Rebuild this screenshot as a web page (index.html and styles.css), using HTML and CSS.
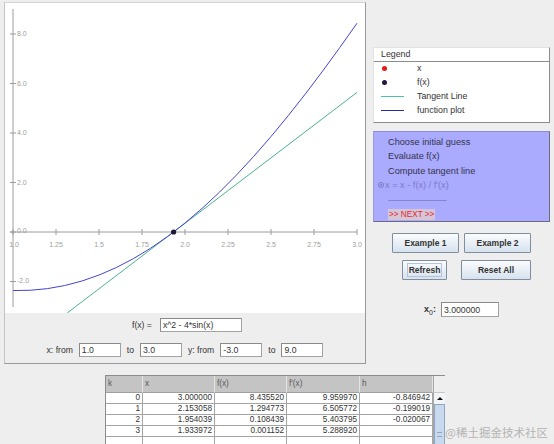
FILE: index.html
```html
<!DOCTYPE html>
<html lang="en">

<head>
    <meta charset="UTF-8">
    <meta name="viewport" content="width=device-width, initial-scale=1.0">
    <link rel="stylesheet" href="styles.css">
</head>

<body>

    <div class="app">
        <div class="top">
            <div class="plot-panel">
                <svg class="plot" width="360" height="310" viewBox="0 0 360 310">
                    <!-- axes -->
                    <g class="axis">
                        <line x1="8" y1="6" x2="8" y2="304" />
                        <line x1="5" y1="229" x2="352" y2="229" />
                        <line x1="8" y1="226" x2="8" y2="232" />
                        <line x1="51" y1="226" x2="51" y2="232" />
                        <line x1="94" y1="226" x2="94" y2="232" />
                        <line x1="137" y1="226" x2="137" y2="232" />
                        <line x1="180" y1="226" x2="180" y2="232" />
                        <line x1="223" y1="226" x2="223" y2="232" />
                        <line x1="266" y1="226" x2="266" y2="232" />
                        <line x1="309" y1="226" x2="309" y2="232" />
                        <line x1="352" y1="226" x2="352" y2="232" />
                        <line x1="5" y1="31" x2="11" y2="31" />
                        <line x1="5" y1="80.5" x2="11" y2="80.5" />
                        <line x1="5" y1="130" x2="11" y2="130" />
                        <line x1="5" y1="179.5" x2="11" y2="179.5" />
                        <line x1="5" y1="229" x2="11" y2="229" />
                        <line x1="5" y1="278.5" x2="11" y2="278.5" />
                    </g>
                    <g class="tick-label x-labels">
                        <text x="9" y="243.5">1.0</text>
                        <text x="51" y="243.5">1.25</text>
                        <text x="94" y="243.5">1.5</text>
                        <text x="137" y="243.5">1.75</text>
                        <text x="180" y="243.5">2.0</text>
                        <text x="223" y="243.5">2.25</text>
                        <text x="266" y="243.5">2.5</text>
                        <text x="309" y="243.5">2.75</text>
                        <text x="352" y="243.5">3.0</text>
                    </g>
                    <g class="tick-label y-labels">
                        <text x="12" y="33">8.0</text>
                        <text x="12" y="82.5">6.0</text>
                        <text x="12" y="132">4.0</text>
                        <text x="12" y="181.5">2.0</text>
                        <text x="12" y="230">0.0</text>
                        <text x="12" y="280">-2.0</text>
                    </g>
                    <!-- tangent line and function -->
                    <line class="tangent" x1="62.2" y1="310" x2="352" y2="89.4" />
                    <polyline class="curve" points="8,287.56 25.2,287.28 42.4,285.63 59.6,282.57 76.8,278.05 94,272.06 111.2,264.6 128.4,255.65 145.6,245.22 162.8,233.34 180,220.02 197.2,205.31 214.4,189.25 231.6,171.9 248.8,153.31 266,133.56 283.2,112.73 300.4,90.88 317.6,68.12 334.8,44.54 352,20.22" />
                    <circle class="root" cx="168.6" cy="229" r="2.6" />
                </svg>

                <div class="controls">
                    <div class="ctl-row fx-row">
                        <span>f(x) =</span>
                        <input class="field w-fx" type="text" value="x^2 - 4*sin(x)">
                    </div>
                    <div class="ctl-row">
                        <span>x: from</span>
                        <input class="field w-num" type="text" value="1.0">
                        <span>to</span>
                        <input class="field w-num" type="text" value="3.0">
                        <span>y: from</span>
                        <input class="field w-num" type="text" value="-3.0">
                        <span>to</span>
                        <input class="field w-num" type="text" value="9.0">
                    </div>
                </div>
            </div>

            <div class="side">
                <div class="legend">
                    <div class="legend-title">Legend</div>
                    <div class="legend-list">
                        <div class="legend-item">
                            <span class="legend-icon"><span class="dot dot-x"></span></span>x
                        </div>
                        <div class="legend-item">
                            <span class="legend-icon"><span class="dot dot-fx"></span></span>f(x)
                        </div>
                        <div class="legend-item">
                            <span class="legend-icon"><span class="lline lline-tan"></span></span>Tangent Line
                        </div>
                        <div class="legend-item">
                            <span class="legend-icon"><span class="lline lline-fn"></span></span>function plot
                        </div>
                    </div>
                </div>

                <div class="steps">
                    <div class="step">Choose initial guess</div>
                    <div class="step">Evaluate f(x)</div>
                    <div class="step">Compute tangent line</div>
                    <div class="step current"><span class="radio"></span>x = x - f(x) / f'(x)</div>
                    <div class="step sep">----------------------</div>
                    <div class="step"><span class="next">&gt;&gt; NEXT &gt;&gt;</span></div>
                </div>

                <div class="btn-row r1">
                    <button class="btn w67" type="button">Example 1</button>
                    <button class="btn w67" type="button">Example 2</button>
                </div>
                <div class="btn-row r2">
                    <button class="btn w45" type="button"><span class="focus">Refresh</span></button>
                    <button class="btn w70" type="button">Reset All</button>
                </div>

                <div class="x0-row">
                    <span class="x0-label">x<sub>0</sub>:</span>
                    <input class="field w-x0" type="text" value="3.000000">
                </div>
            </div>
        </div>

        <div class="table-area">
            <div class="table-wrap">
                <table class="iter-table">
                    <colgroup>
                        <col style="width: 37px">
                        <col style="width: 72px">
                        <col style="width: 72px">
                        <col style="width: 73px">
                        <col style="width: 73px">
                    </colgroup>
                    <thead>
                        <tr><th>k</th><th>x</th><th>f(x)</th><th>f'(x)</th><th>h</th></tr>
                    </thead>
                    <tbody>
                        <tr><td>0</td><td>3.000000</td><td>8.435520</td><td>9.959970</td><td>-0.846942</td></tr>
                        <tr><td>1</td><td>2.153058</td><td>1.294773</td><td>6.505772</td><td>-0.199019</td></tr>
                        <tr><td>2</td><td>1.954039</td><td>0.108439</td><td>5.403795</td><td>-0.020067</td></tr>
                        <tr><td>3</td><td>1.933972</td><td>0.001152</td><td>5.288920</td><td></td></tr>
                        <tr><td></td><td></td><td></td><td></td><td></td></tr>
                    </tbody>
                </table>
                <div class="vscroll">
                    <div class="corner"></div>
                    <div class="arrow-up"><span class="tri"></span></div>
                    <div class="thumb"><span class="grip"></span></div>
                </div>
            </div>
        </div>
    </div>

    <div class="watermark">@稀土掘金技术社区</div>

</body>

</html>
```

FILE: styles.css
```css
body {
    margin: 0;
    width: 554px;
    height: 444px;
    overflow: hidden;
    position: relative;
    background-color: #eeeeee;
    font-family: "Liberation Sans", Arial, sans-serif;
    color: #333;
}

.app {
    padding-top: 2px;
}

.top {
    display: flex;
    align-items: flex-start;
}

/* plot panel */

.plot-panel {
    margin-left: 4px;
    width: 362px;
    box-sizing: border-box;
    border: 1px solid #9a9a9a;
    border-top-color: #d4d4d4;
    border-left-color: #c4c4c4;
}

.plot {
    display: block;
    background-color: #fff;
}

.axis line {
    stroke: #9c9c9c;
    stroke-width: 1;
}

.tick-label text {
    font-family: "Liberation Sans", Arial, sans-serif;
    font-size: 7px;
    fill: #a0a0a0;
}

.x-labels text {
    text-anchor: middle;
}

.curve {
    fill: none;
    stroke: #4444d2;
    stroke-width: 1;
}

.tangent {
    stroke: #4cb48c;
    stroke-width: 1;
}

.root {
    fill: #1e1a36;
}

.controls {
    height: 50px;
    box-sizing: border-box;
    padding-top: 5px;
    display: flex;
    flex-direction: column;
    align-items: center;
    gap: 11px;
}

.ctl-row {
    display: flex;
    align-items: center;
    gap: 6px;
    height: 14px;
    font-size: 8.6px;
    color: #333;
}

.fx-row {
    gap: 8px;
    margin-left: 4px;
}

.field {
    box-sizing: border-box;
    height: 14px;
    margin: 0;
    padding: 0 2px;
    border: 1px solid #a2a2a2;
    border-top-color: #8a8a8a;
    border-left-color: #8a8a8a;
    background-color: #fff;
    font-family: "Liberation Sans", Arial, sans-serif;
    font-size: 8.7px;
    color: #333;
    outline: none;
}

.w-fx {
    width: 82px;
}

.w-num {
    width: 42px;
}

.w-x0 {
    width: 58px;
    height: 15px;
}

/* right column */

.side {
    width: 188px;
    box-sizing: border-box;
    padding: 45px 0 0 7px;
}

.legend {
    width: 177px;
    height: 76px;
    box-sizing: border-box;
    background-color: #fff;
    border: 1px solid #8c8c8c;
    border-top-color: #e2e2e2;
    border-left-color: #e2e2e2;
    font-size: 8.8px;
}

.legend-title {
    height: 13px;
    line-height: 13px;
    padding-left: 7px;
    border-bottom: 1px solid #8c8c8c;
}

.legend-list {
    margin-top: -1px;
}

.legend-item {
    display: flex;
    align-items: center;
    height: 14px;
}

.legend-icon {
    width: 43px;
    display: flex;
    align-items: center;
}

.dot {
    width: 5px;
    height: 5px;
    border-radius: 50%;
    margin-left: 8px;
}

.dot-x {
    background-color: #e81818;
}

.dot-fx {
    background-color: #24163c;
}

.lline {
    width: 23px;
    height: 1px;
    margin-left: 7px;
}

.lline-tan {
    background-color: #4cc49c;
}

.lline-fn {
    background-color: #2a2aa0;
}

.steps {
    margin-top: 8px;
    width: 177px;
    height: 91px;
    box-sizing: border-box;
    padding: 3px 0 0 14px;
    background-color: #aaaaff;
    border: 1px solid #6c6c7c;
    border-top-color: #8c8cd8;
    border-left-color: #9a9ae0;
    font-size: 9.2px;
    color: #34344a;
}

.step {
    height: 14.4px;
    line-height: 14.4px;
    white-space: nowrap;
}

.step.current {
    display: flex;
    align-items: center;
    gap: 1px;
    margin-left: -10px;
    color: #7a7ac6;
}

.radio {
    width: 6px;
    height: 6px;
    box-sizing: border-box;
    border: 1px solid #7a7ac6;
    border-radius: 50%;
    display: flex;
    align-items: center;
    justify-content: center;
}

.radio::after {
    content: "";
    width: 2px;
    height: 2px;
    border-radius: 50%;
    background-color: #7a7ac6;
}

.step.sep {
    color: #7474a8;
    letter-spacing: -0.4px;
}

.next {
    display: inline-block;
    padding: 0 1px;
    line-height: 11px;
    font-size: 8.2px;
    background-color: #d4c6d8;
    color: #e42828;
}

.btn-row {
    display: flex;
}

.r1 {
    margin-top: 11px;
    padding-left: 19px;
    gap: 5px;
}

.r2 {
    margin-top: 7px;
    padding-left: 29px;
    gap: 14px;
}

.btn {
    box-sizing: border-box;
    height: 20px;
    margin: 0;
    padding: 0;
    border: 1px solid #7f8e9e;
    border-radius: 1px;
    background: linear-gradient(#fbfcfe, #d6e2ee);
    font-family: "Liberation Sans", Arial, sans-serif;
    font-size: 8.5px;
    font-weight: bold;
    color: #333;
    display: flex;
    align-items: center;
    justify-content: center;
}

.w67 {
    width: 67px;
}

.w45 {
    width: 45px;
}

.w70 {
    width: 70px;
}

.focus {
    border: 1px solid #b4c4d6;
    padding: 1px 1px;
    line-height: 10px;
}

.x0-row {
    margin-top: 22px;
    padding-left: 51px;
    display: flex;
    align-items: center;
    gap: 5px;
}

.x0-label {
    font-size: 9px;
    font-weight: bold;
    color: #333;
}

.x0-label sub {
    font-size: 7px;
    font-weight: normal;
}

/* iterations table */

.table-area {
    margin-top: 11px;
    padding-left: 105px;
    display: flex;
}

.table-wrap {
    display: flex;
    align-items: flex-start;
    border-top: 1px solid #8c8c8c;
    border-left: 1px solid #8c8c8c;
}

.iter-table {
    border-collapse: separate;
    border-spacing: 0;
    table-layout: fixed;
    width: 327px;
    background-color: #fff;
    font-size: 8.2px;
}

.iter-table th {
    padding: 0 0 0 2px;
    line-height: 16px;
    background-color: #c4c4c4;
    border-right: 1px solid #e4e4e4;
    border-bottom: 1px solid #a0a0a0;
    text-align: left;
    font-weight: normal;
    color: #5a5a5a;
}

.iter-table td {
    padding: 0 2px 0 0;
    line-height: 10px;
    border-right: 1px solid #a4a4a4;
    border-bottom: 1px solid #a4a4a4;
    text-align: right;
    color: #333;
}

.iter-table td:empty::after {
    content: "\00a0";
}

.vscroll {
    width: 11px;
    display: flex;
    flex-direction: column;
    border-left: 1px solid #a8a8a8;
    background-color: #eee;
}

.corner {
    height: 16px;
    border-bottom: 1px solid #c8c8c8;
}

.arrow-up {
    height: 11px;
    display: flex;
    align-items: center;
    justify-content: center;
    background-color: #f2f4f8;
}

.tri {
    width: 0;
    height: 0;
    border-left: 3px solid transparent;
    border-right: 3px solid transparent;
    border-bottom: 3px solid #111;
}

.thumb {
    height: 60px;
    box-sizing: border-box;
    border: 1px solid #8ea6c2;
    background-color: #c8d9ee;
    display: flex;
    justify-content: center;
    padding-top: 27px;
}

.grip {
    width: 5px;
    height: 3px;
    border-top: 1px solid #8ea6c2;
    border-bottom: 1px solid #8ea6c2;
}

.watermark {
    position: absolute;
    left: 445px;
    top: 424px;
    font-family: "Noto Sans CJK SC", sans-serif;
    font-size: 11.5px;
    line-height: 16px;
    color: #b4b4b4;
    white-space: nowrap;
}
```
